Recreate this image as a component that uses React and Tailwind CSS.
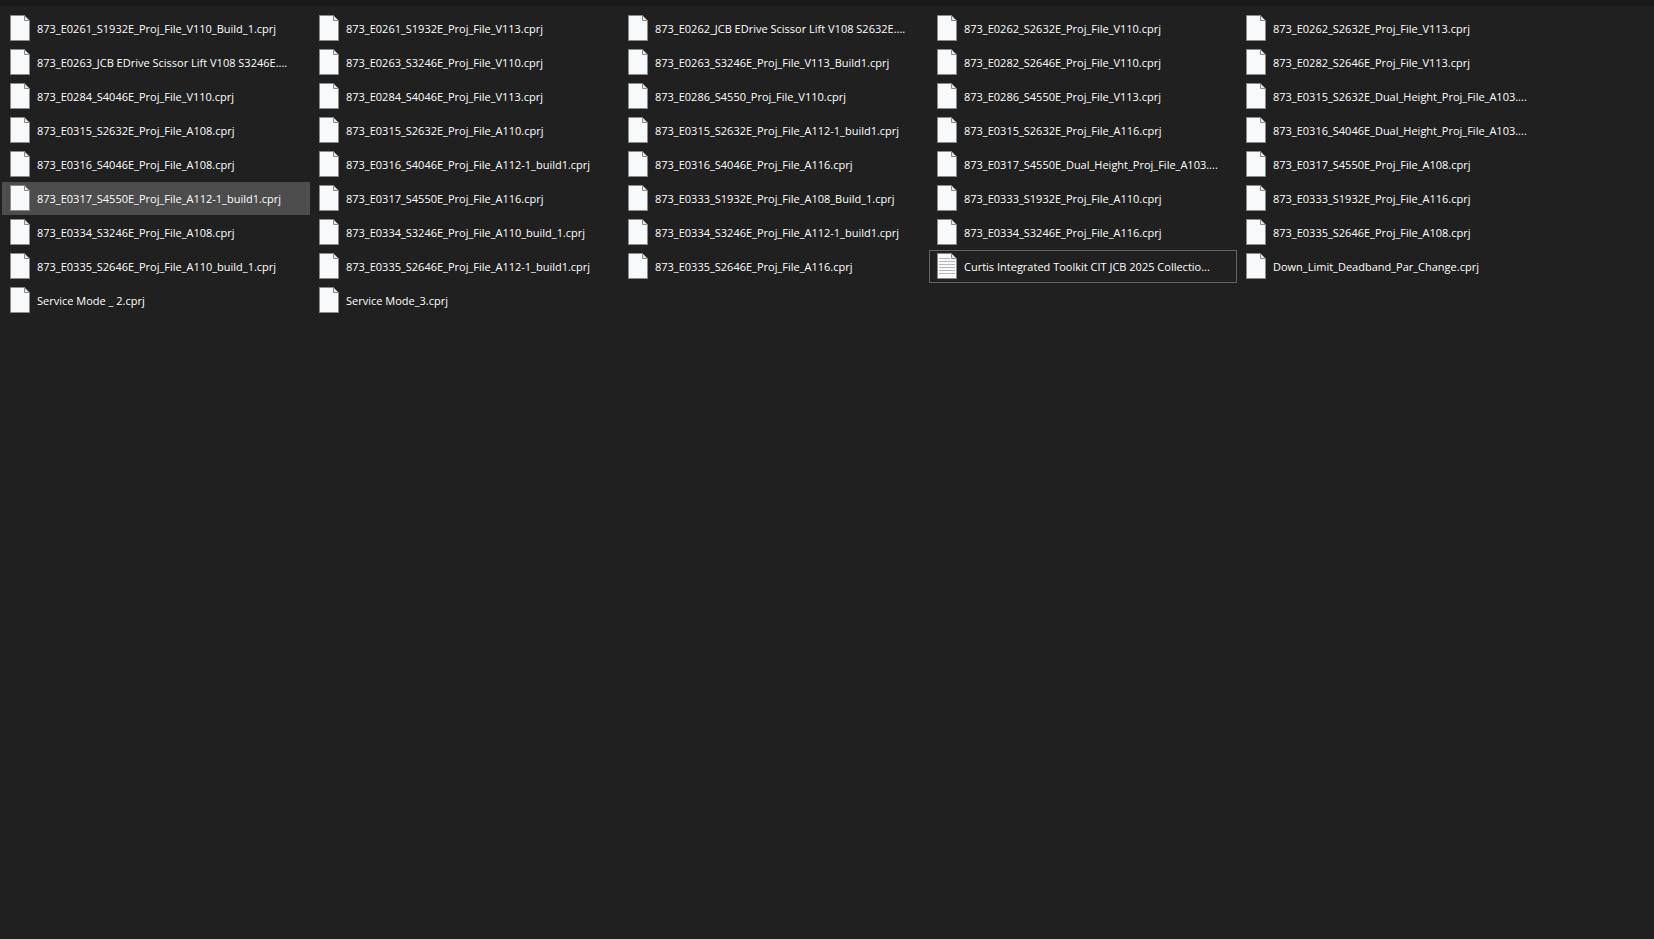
import React, { useState } from 'react';

const files = [
  '873_E0261_S1932E_Proj_File_V110_Build_1.cprj',
  '873_E0261_S1932E_Proj_File_V113.cprj',
  '873_E0262_JCB EDrive Scissor Lift V108 S2632E....',
  '873_E0262_S2632E_Proj_File_V110.cprj',
  '873_E0262_S2632E_Proj_File_V113.cprj',
  '873_E0263_JCB EDrive Scissor Lift V108 S3246E....',
  '873_E0263_S3246E_Proj_File_V110.cprj',
  '873_E0263_S3246E_Proj_File_V113_Build1.cprj',
  '873_E0282_S2646E_Proj_File_V110.cprj',
  '873_E0282_S2646E_Proj_File_V113.cprj',
  '873_E0284_S4046E_Proj_File_V110.cprj',
  '873_E0284_S4046E_Proj_File_V113.cprj',
  '873_E0286_S4550_Proj_File_V110.cprj',
  '873_E0286_S4550E_Proj_File_V113.cprj',
  '873_E0315_S2632E_Dual_Height_Proj_File_A103....',
  '873_E0315_S2632E_Proj_File_A108.cprj',
  '873_E0315_S2632E_Proj_File_A110.cprj',
  '873_E0315_S2632E_Proj_File_A112-1_build1.cprj',
  '873_E0315_S2632E_Proj_File_A116.cprj',
  '873_E0316_S4046E_Dual_Height_Proj_File_A103....',
  '873_E0316_S4046E_Proj_File_A108.cprj',
  '873_E0316_S4046E_Proj_File_A112-1_build1.cprj',
  '873_E0316_S4046E_Proj_File_A116.cprj',
  '873_E0317_S4550E_Dual_Height_Proj_File_A103....',
  '873_E0317_S4550E_Proj_File_A108.cprj',
  '873_E0317_S4550E_Proj_File_A112-1_build1.cprj',
  '873_E0317_S4550E_Proj_File_A116.cprj',
  '873_E0333_S1932E_Proj_File_A108_Build_1.cprj',
  '873_E0333_S1932E_Proj_File_A110.cprj',
  '873_E0333_S1932E_Proj_File_A116.cprj',
  '873_E0334_S3246E_Proj_File_A108.cprj',
  '873_E0334_S3246E_Proj_File_A110_build_1.cprj',
  '873_E0334_S3246E_Proj_File_A112-1_build1.cprj',
  '873_E0334_S3246E_Proj_File_A116.cprj',
  '873_E0335_S2646E_Proj_File_A108.cprj',
  '873_E0335_S2646E_Proj_File_A110_build_1.cprj',
  '873_E0335_S2646E_Proj_File_A112-1_build1.cprj',
  '873_E0335_S2646E_Proj_File_A116.cprj',
  'Curtis Integrated Toolkit CIT JCB 2025 Collectio...',
  'Down_Limit_Deadband_Par_Change.cprj',
  'Service Mode _ 2.cprj',
  'Service Mode_3.cprj',
];

const TEXT_FILE = 38;

function FileIcon({ lines }) {
  return (
    <svg width="20" height="27" viewBox="0 0 20 27" className="shrink-0" aria-hidden="true">
      <path d="M0.5 0.5H14.5L19.5 5.5V25.5H0.5Z" fill="#f7f9fa" stroke="#8a8a8a" />
      <path d="M14.5 0.5V5.5H19.5Z" fill="#e4e6e8" stroke="#8a8a8a" />
      {lines && (
        <path
          d="M2 5.5H13M2 8.5H18M2 11.5H18M2 14.5H18M2 17.5H18M2 20.5H18"
          stroke="#b4b6b8"
          fill="none"
        />
      )}
    </svg>
  );
}

export default function App() {
  const [hovered, setHovered] = useState(25);
  const [focused, setFocused] = useState(TEXT_FILE);

  return (
    <div className="flex min-h-screen flex-col border-t-[6px] border-b-2 border-t-[#191919] border-b-[#231f20] bg-[#202020] font-['Open_Sans','Noto_Sans',sans-serif] text-white">
      <ul className="grid grid-cols-[repeat(auto-fill,308px)] gap-px pt-1.5 pl-0.5">
        {files.map((name, i) => (
          <li key={name}>
            <button
              type="button"
              onMouseEnter={() => setHovered(i)}
              onClick={() => setFocused(i)}
              className={`flex h-[33px] w-full items-center gap-[7px] border px-[7px] text-left ${
                i === hovered ? 'bg-[#4d4d4d]' : ''
              } ${i === focused ? 'border-[#636363]' : 'border-transparent'}`}
            >
              <FileIcon lines={i === TEXT_FILE} />
              <span className="pt-px text-[11px] leading-[18px] whitespace-nowrap">{name}</span>
            </button>
          </li>
        ))}
      </ul>
    </div>
  );
}
